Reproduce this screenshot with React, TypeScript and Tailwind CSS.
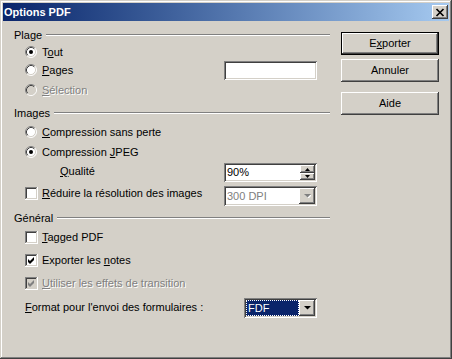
import React from "react";

const raised =
  "shadow-[inset_-1px_-1px_#404040,inset_1px_1px_#ffffff,inset_-2px_-2px_#808080,inset_2px_2px_#d4d0c8]";
const sunken =
  "shadow-[inset_1px_1px_#808080,inset_-1px_-1px_#ffffff,inset_2px_2px_#404040,inset_-2px_-2px_#d4d0c8]";
const disabledText = "text-[#808080] [text-shadow:1px_1px_0_#ffffff]";

const Radio: React.FC<{ checked?: boolean; disabled?: boolean }> = ({
  checked,
  disabled,
}) => (
  <svg width="12" height="12" viewBox="0 0 12 12" className="shrink-0">
    <circle cx="6" cy="6" r="5" fill={disabled ? "#d4d0c8" : "#ffffff"} />
    <path d="M2.11 9.89 A5.5 5.5 0 0 1 9.89 2.11" fill="none" stroke="#808080" />
    <path d="M9.89 2.11 A5.5 5.5 0 0 1 2.11 9.89" fill="none" stroke="#ffffff" />
    <path d="M2.82 9.18 A4.5 4.5 0 0 1 9.18 2.82" fill="none" stroke="#404040" />
    <path d="M9.18 2.82 A4.5 4.5 0 0 1 2.82 9.18" fill="none" stroke="#d4d0c8" />
    {checked && <circle cx="6" cy="6" r="2" fill="#000000" />}
  </svg>
);

const Check: React.FC<{ checked?: boolean; disabled?: boolean }> = ({
  checked,
  disabled,
}) => (
  <svg width="13" height="13" viewBox="0 0 13 13" className="shrink-0">
    <rect x="0" y="0" width="13" height="13" fill="#ffffff" />
    <rect x="0" y="0" width="12" height="12" fill="#808080" />
    <rect x="1" y="1" width="11" height="11" fill="#d4d0c8" />
    <rect x="1" y="1" width="10" height="10" fill="#404040" />
    <rect x="2" y="2" width="9" height="9" fill={disabled ? "#d4d0c8" : "#ffffff"} />
    {checked && (
      <polygon
        points="3,5 5,7 9,3 9,6 5,10 3,8"
        fill={disabled ? "#808080" : "#000000"}
      />
    )}
  </svg>
);

const Header: React.FC<{ label: string; className?: string }> = ({
  label,
  className,
}) => (
  <div className={`flex items-center h-[16px] ${className ?? ""}`}>
    <span>{label}</span>
    <div className="flex-1 ml-[4px] h-[2px] border-t border-t-[#808080] border-b border-b-[#ffffff]" />
  </div>
);

const Arrow: React.FC<{ disabled?: boolean }> = ({ disabled }) => (
  <svg width="7" height="4" viewBox="0 0 7 4">
    {disabled && <polygon points="1,1 8,1 4.5,4.5" fill="#ffffff" />}
    <polygon points="0,0 7,0 3.5,3.5" fill={disabled ? "#808080" : "#000000"} />
  </svg>
);

export default function App() {
  return (
    <div
      className={`w-[452px] h-[359px] bg-[#d4d0c8] p-[3px] flex flex-col text-[11px] text-black [font-family:'Liberation_Sans',Arial,sans-serif] shadow-[inset_-1px_-1px_#404040,inset_1px_1px_#d4d0c8,inset_-2px_-2px_#808080,inset_2px_2px_#ffffff]`}
    >
      {/* title bar */}
      <div className="h-[18px] shrink-0 flex items-center justify-between pl-[1px] bg-linear-to-r from-[#0a246a] to-[#a6caf0]">
        <span className="font-bold text-white">Options PDF</span>
        <div
          className={`w-[16px] h-[14px] mr-[1px] bg-[#d4d0c8] flex items-center justify-center ${raised}`}
        >
          <svg width="10" height="9" viewBox="0 0 10 9">
            <path d="M1.5 1 L8.5 8 M8.5 1 L1.5 8" stroke="#000000" strokeWidth="1.7" />
          </svg>
        </div>
      </div>

      <div className="flex flex-1">
        {/* left column */}
        <div className="w-[327px] pl-[11px] pt-[6px] flex flex-col">
          <Header label="Plage" />

          <div className="flex items-center h-[18px] pl-[11px] gap-[5px]">
            <Radio checked />
            <span>
              T<span className="underline">o</span>ut
            </span>
          </div>

          <div className="flex items-center h-[18px] pl-[11px]">
            <div className="w-[199px] flex items-center gap-[5px]">
              <Radio />
              <span>
                <span className="underline">P</span>ages
              </span>
            </div>
            <div className={`w-[93px] h-[19px] bg-white self-start ${sunken}`} />
          </div>

          <div className="flex items-center h-[18px] pl-[11px] gap-[5px] mt-[2px]">
            <Radio disabled />
            <span className={disabledText}>
              <span className="underline">S</span>élection
            </span>
          </div>

          <Header label="Images" className="mt-[6px]" />

          <div className="flex items-center h-[18px] pl-[11px] gap-[5px] mt-[2px]">
            <Radio />
            <span>
              <span className="underline">C</span>ompression sans perte
            </span>
          </div>

          <div className="flex items-center h-[18px] pl-[11px] gap-[5px] mt-[2px]">
            <Radio checked />
            <span>
              Compression <span className="underline">J</span>PEG
            </span>
          </div>

          <div className="flex items-center h-[18px] pl-[11px] mt-[1px]">
            <div className="w-[199px] pl-[35px]">
              <span className="underline">Q</span>ualité
            </div>
            <div className={`w-[93px] h-[19px] bg-white self-start mt-[1px] p-[2px] flex ${sunken}`}>
              <span className="flex-1 pl-[1px] leading-[15px]">90%</span>
              <div className="w-[15px] flex flex-col">
                <div className={`h-[8px] bg-[#d4d0c8] flex items-center justify-center ${raised}`}>
                  <svg width="5" height="3" viewBox="0 0 5 3">
                    <polygon points="2.5,0 5,3 0,3" fill="#000000" />
                  </svg>
                </div>
                <div className={`h-[7px] bg-[#d4d0c8] flex items-center justify-center ${raised}`}>
                  <svg width="5" height="3" viewBox="0 0 5 3">
                    <polygon points="0,0 5,0 2.5,3" fill="#000000" />
                  </svg>
                </div>
              </div>
            </div>
          </div>

          <div className="flex items-center h-[18px] pl-[11px] mt-[4px]">
            <div className="w-[199px] flex items-center gap-[4px]">
              <Check />
              <span>
                <span className="underline">R</span>éduire la résolution des images
              </span>
            </div>
            <div className={`w-[93px] h-[20px] bg-white self-start mt-[2px] p-[2px] flex ${sunken}`}>
              <span className={`flex-1 pl-[1px] leading-[16px] ${disabledText} [text-shadow:none]`}>
                300 DPI
              </span>
              <div className={`w-[16px] bg-[#d4d0c8] flex items-center justify-center ${raised}`}>
                <Arrow disabled />
              </div>
            </div>
          </div>

          <Header label="Général" className="mt-[8px]" />

          <div className="flex items-center h-[18px] pl-[11px] gap-[4px] mt-[2px]">
            <Check />
            <span>
              <span className="underline">T</span>agged PDF
            </span>
          </div>

          <div className="flex items-center h-[18px] pl-[11px] gap-[4px] mt-[5px]">
            <Check checked />
            <span>
              Exporter les <span className="underline">n</span>otes
            </span>
          </div>

          <div className="flex items-center h-[18px] pl-[11px] gap-[4px] mt-[5px]">
            <Check checked disabled />
            <span className={disabledText}>
              <span className="underline">U</span>tiliser les effets de transition
            </span>
          </div>

          <div className="flex items-center h-[18px] pl-[11px] mt-[6px]">
            <div className="w-[219px]">
              <span className="underline">F</span>ormat pour l'envoi des formulaires :
            </div>
            <div className={`w-[73px] h-[20px] bg-white self-start p-[2px] flex ${sunken}`}>
              <div className="flex-1 bg-[#0a246a] border border-dotted border-[#ffffff] text-white flex items-center pl-[1px]">
                FDF
              </div>
              <div className={`w-[16px] bg-[#d4d0c8] flex items-center justify-center ${raised}`}>
                <Arrow />
              </div>
            </div>
          </div>
        </div>

        {/* right column: buttons */}
        <div className="ml-[11px] pt-[11px] flex flex-col w-[98px]">
          <div className="h-[23px] border border-black bg-[#d4d0c8]">
            <div className={`h-full flex items-center justify-center ${raised}`}>
              <span>
                E<span className="underline">x</span>porter
              </span>
            </div>
          </div>
          <div className={`h-[23px] mt-[4px] bg-[#d4d0c8] flex items-center justify-center ${raised}`}>
            Annuler
          </div>
          <div className={`h-[23px] mt-[10px] bg-[#d4d0c8] flex items-center justify-center ${raised}`}>
            Aide
          </div>
        </div>
      </div>
    </div>
  );
}
